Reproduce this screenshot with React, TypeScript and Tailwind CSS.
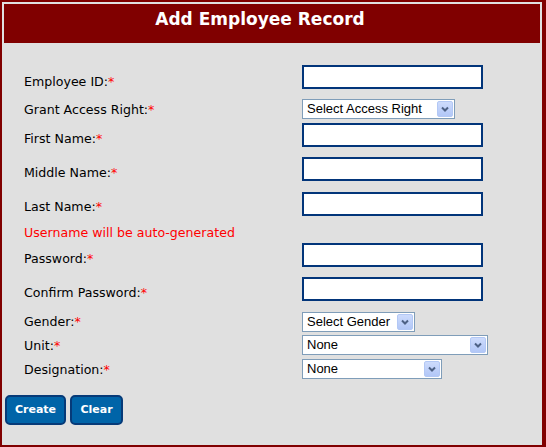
import React from "react";

const labelFont = { fontFamily: '"DejaVu Sans", Verdana, sans-serif' };

function Arrow() {
  return (
    <span className="flex h-[16px] w-[16px] items-center justify-center rounded-[2px] border border-[#b3c8f5] bg-gradient-to-b from-[#cddbfc] to-[#b2c7f7]">
      <svg width="8" height="6" viewBox="0 0 8 6">
        <path d="M1 1.5 L4 4.5 L7 1.5" fill="none" stroke="#4d6185" strokeWidth="2" />
      </svg>
    </span>
  );
}

function Select({ text, w }: { text: string; w: string }) {
  return (
    <div
      className={`flex h-[20px] ${w} items-center justify-between border border-[#7f9db9] bg-white pl-[4px] pr-[1px] text-[13px] leading-[16px] text-black`}
      style={{ fontFamily: '"Liberation Sans", Tahoma, sans-serif' }}
    >
      <span>{text}</span>
      <Arrow />
    </div>
  );
}

function Input() {
  return <div className="mb-[6px] h-[24px] w-[181px] border-2 border-[#02357a] bg-white" />;
}

function Label({ text, star = true }: { text: string; star?: boolean }) {
  return (
    <span className="w-[278px] text-[12.6px] leading-[15px] text-black" style={labelFont}>
      {text}
      {star && <span className="text-[#ff0000]">*</span>}
    </span>
  );
}

export default function App() {
  return (
    <div className="h-[447px] w-[546px] border-b-2 border-l-2 border-r-4 border-t-2 border-[#800000] bg-[#e0e0e0] p-[2px]">
      <div
        className="h-[39px] bg-[#800000] pt-[5px] text-center text-[17px] font-bold leading-[20px] text-white"
        style={{ fontFamily: '"DejaVu Sans", Verdana, sans-serif' }}
      >
        <span className="pr-[24px]">Add Employee Record</span>
      </div>

      <div className="mt-[24px] flex flex-col pl-[20px]">
        <div className="flex h-[28px] items-center">
          <Label text="Employee ID:" />
          <div className="mb-[2px]">
            <Input />
          </div>
        </div>
        <div className="flex h-[28px] items-center">
          <Label text="Grant Access Right:" />
          <Select text="Select Access Right" w="w-[153px]" />
        </div>
        <div className="flex h-[30px] items-center">
          <Label text="First Name:" />
          <Input />
        </div>
        <div className="flex h-[38px] items-center">
          <Label text="Middle Name:" />
          <Input />
        </div>
        <div className="flex h-[31px] items-center">
          <Label text="Last Name:" />
          <Input />
        </div>
        <div className="flex h-[20px] items-center">
          <span className="text-[12.6px] leading-[15px] text-[#ff0000]" style={labelFont}>
            Username will be auto-generated
          </span>
        </div>
        <div className="flex h-[32px] items-center">
          <Label text="Password:" />
          <Input />
        </div>
        <div className="flex h-[36px] items-center">
          <Label text="Confirm Password:" />
          <Input />
        </div>
        <div className="flex h-[23px] items-center">
          <Label text="Gender:" />
          <Select text="Select Gender" w="w-[113px]" />
        </div>
        <div className="flex h-[24px] items-center">
          <Label text="Unit:" />
          <Select text="None" w="w-[186px]" />
        </div>
        <div className="flex h-[24px] items-center">
          <Label text="Designation:" />
          <Select text="None" w="w-[140px]" />
        </div>
      </div>

      <div className="ml-[1px] mt-[14px] flex gap-[4px]">
        <button
          className="h-[30px] w-[61px] rounded-[5px] border-2 border-[#063a78] bg-[#0064a8] text-[11px] font-bold text-white"
          style={labelFont}
        >
          Create
        </button>
        <button
          className="h-[30px] w-[53px] rounded-[5px] border-2 border-[#063a78] bg-[#0064a8] text-[11px] font-bold text-white"
          style={labelFont}
        >
          Clear
        </button>
      </div>
    </div>
  );
}
